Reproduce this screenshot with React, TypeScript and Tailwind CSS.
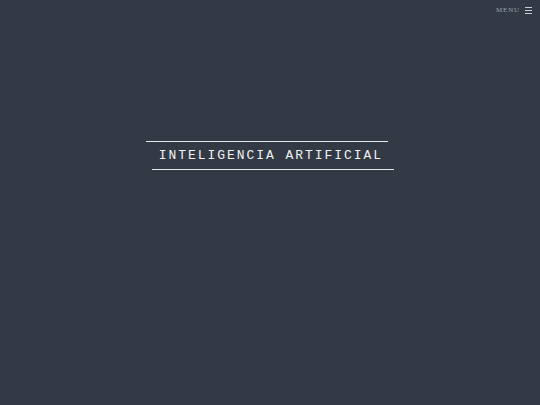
export default function App() {
  return (
    <div className="w-[540px] h-[405px] bg-[#333a46] flex flex-col">
      <div className="flex justify-end items-center gap-[5px] pt-[7px] pr-[8px]">
        <span className="text-[7px] tracking-[0.12em] text-[#9aa1ab] font-['Liberation_Serif',serif] leading-[7px]">
          MENU
        </span>
        <div className="flex flex-col gap-[2px]">
          <div className="w-[7px] h-[1px] bg-[#c9ced6]" />
          <div className="w-[7px] h-[1px] bg-[#c9ced6]" />
          <div className="w-[7px] h-[1px] bg-[#c9ced6]" />
        </div>
      </div>
      <div className="flex flex-col items-center mt-[127px]">
        <div className="w-[242px] h-px bg-[#e6e8ec] -translate-x-[3px]" />
        <div className="py-[7px] text-[13px] leading-[13px] tracking-[0.15em] text-[#f1f2f4] font-['Liberation_Mono',monospace] pl-[0.15em]">
          INTELIGENCIA ARTIFICIAL
        </div>
        <div className="w-[242px] h-px bg-[#e6e8ec] translate-x-[3px]" />
      </div>
    </div>
  );
}
